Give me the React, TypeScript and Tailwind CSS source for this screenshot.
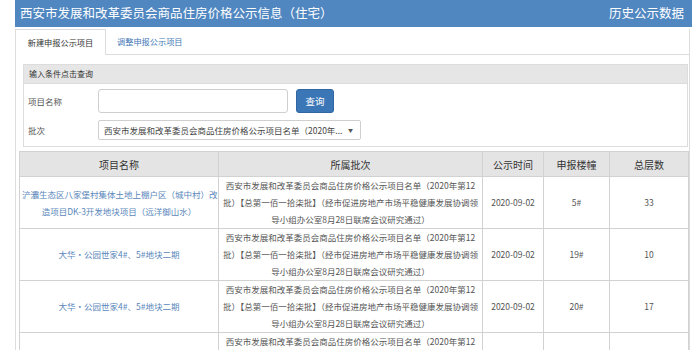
import React from 'react';

const rows = [
  {
    name: ['浐灞生态区八家堡村集体土地上棚户区（城中村）改', '造项目DK-3开发地块项目（远洋御山水）'],
    date: '2020-09-02',
    bld: '5#',
    floors: '33',
  },
  { name: ['大华·公园世家4#、5#地块二期'], date: '2020-09-02', bld: '19#', floors: '10' },
  { name: ['大华·公园世家4#、5#地块二期'], date: '2020-09-02', bld: '20#', floors: '17' },
  { name: ['大华·公园世家4#、5#地块二期'], date: '2020-09-02', bld: '21#', floors: '17' },
];

const batch = [
  '西安市发展和改革委员会商品住房价格公示项目名单（2020年第12',
  '批）【总第一佰一拾柒批】（经市促进房地产市场平稳健康发展协调领',
  '导小组办公室8月28日联席会议研究通过）',
];

export default function App() {
  return (
    <div className="w-[700px] h-[350px] overflow-hidden bg-white font-['Noto_Sans_CJK_SC',sans-serif] text-[#444]">
      <div className="ml-[15px] w-[677px]">
        {/* Header */}
        <div className="h-[27px] bg-[#5087c1] flex items-center justify-between pl-[5px] pr-[8px] text-white text-[12.5px] leading-none">
          <span>西安市发展和改革委员会商品住房价格公示信息（住宅）</span>
          <span>历史公示数据</span>
        </div>

        <div className="mt-[2px] mr-[2px] border-r border-[#dcdcdc]">
          {/* Tabs */}
          <div className="h-[26px] flex items-end border-b border-[#dcdcdc] text-[8.2px]">
            <div className="w-[91px] h-[26px] -mb-px bg-white border border-b-0 border-[#dcdcdc] flex items-center justify-center text-[#333]">
              新建申报公示项目
            </div>
            <div className="h-[26px] ml-[11px] flex items-center text-[#3f78b6]">调整申报公示项目</div>
          </div>

          <div className="border-l border-[#dcdcdc] pt-[9px] pl-[3px] pr-[1px]">
            {/* Search form */}
            <div className="ml-[4px] border border-[#dcdcdc] h-[83px]">
              <div className="h-[19px] bg-[#e6e6e6] border-b border-[#dcdcdc] flex items-center pl-[5px] text-[8px] text-[#333]">
                输入条件点击查询
              </div>
              <div className="flex items-center mt-[5px] h-[24px]">
                <span className="w-[74px] pl-[4px] text-[8.5px] text-[#555]">项目名称</span>
                <div className="w-[190px] h-[24px] border border-[#cfcfcf] rounded-[3px] bg-white" />
                <button className="ml-[8px] w-[38px] h-[24px] rounded-[3px] bg-[#3b77b7] border border-[#2f66a3] text-white text-[9.5px]">
                  查询
                </button>
              </div>
              <div className="flex items-center mt-[7px] h-[20px]">
                <span className="w-[74px] pl-[4px] text-[8.5px] text-[#555]">批次</span>
                <div className="w-[263px] h-[20px] border border-[#cfcfcf] rounded-[2px] bg-white flex items-center justify-between pl-[5px] pr-[7px] text-[8.5px] text-[#444]">
                  <span className="whitespace-nowrap">西安市发展和改革委员会商品住房价格公示项目名单（2020年...</span>
                  <span className="text-[5px] text-[#555]">▼</span>
                </div>
              </div>
            </div>

            {/* Table */}
            <table className="mt-[4px] w-[669px] table-fixed border-collapse text-[8.5px] leading-[17px]">
              <colgroup>
                <col className="w-[199px]" />
                <col className="w-[264px]" />
                <col className="w-[61px]" />
                <col className="w-[66px]" />
                <col className="w-[79px]" />
              </colgroup>
              <thead>
                <tr className="h-[25px] bg-[#e4e4e4] text-[10px] text-[#333]">
                  <th className="border border-[#d2d2d2] font-normal">项目名称</th>
                  <th className="border border-[#d2d2d2] font-normal">所属批次</th>
                  <th className="border border-[#d2d2d2] font-normal">公示时间</th>
                  <th className="border border-[#d2d2d2] font-normal">申报楼幢</th>
                  <th className="border border-[#d2d2d2] font-normal">总层数</th>
                </tr>
              </thead>
              <tbody>
                {rows.map((r, i) => (
                  <tr key={i} className="h-[52px] text-center align-middle">
                    <td className="border border-[#d2d2d2] text-[#5a87bb] whitespace-nowrap px-[2px]">
                      {r.name.map((l, j) => (
                        <div key={j}>{l}</div>
                      ))}
                    </td>
                    <td className="border border-[#d2d2d2] text-[#555] whitespace-nowrap">
                      {batch.map((l, j) => (
                        <div key={j}>{l}</div>
                      ))}
                    </td>
                    <td className="border border-[#d2d2d2] text-[#555]">{r.date}</td>
                    <td className="border border-[#d2d2d2] text-[#555]">{r.bld}</td>
                    <td className="border border-[#d2d2d2] text-[#555]">{r.floors}</td>
                  </tr>
                ))}
              </tbody>
            </table>
          </div>
        </div>
      </div>
    </div>
  );
}
